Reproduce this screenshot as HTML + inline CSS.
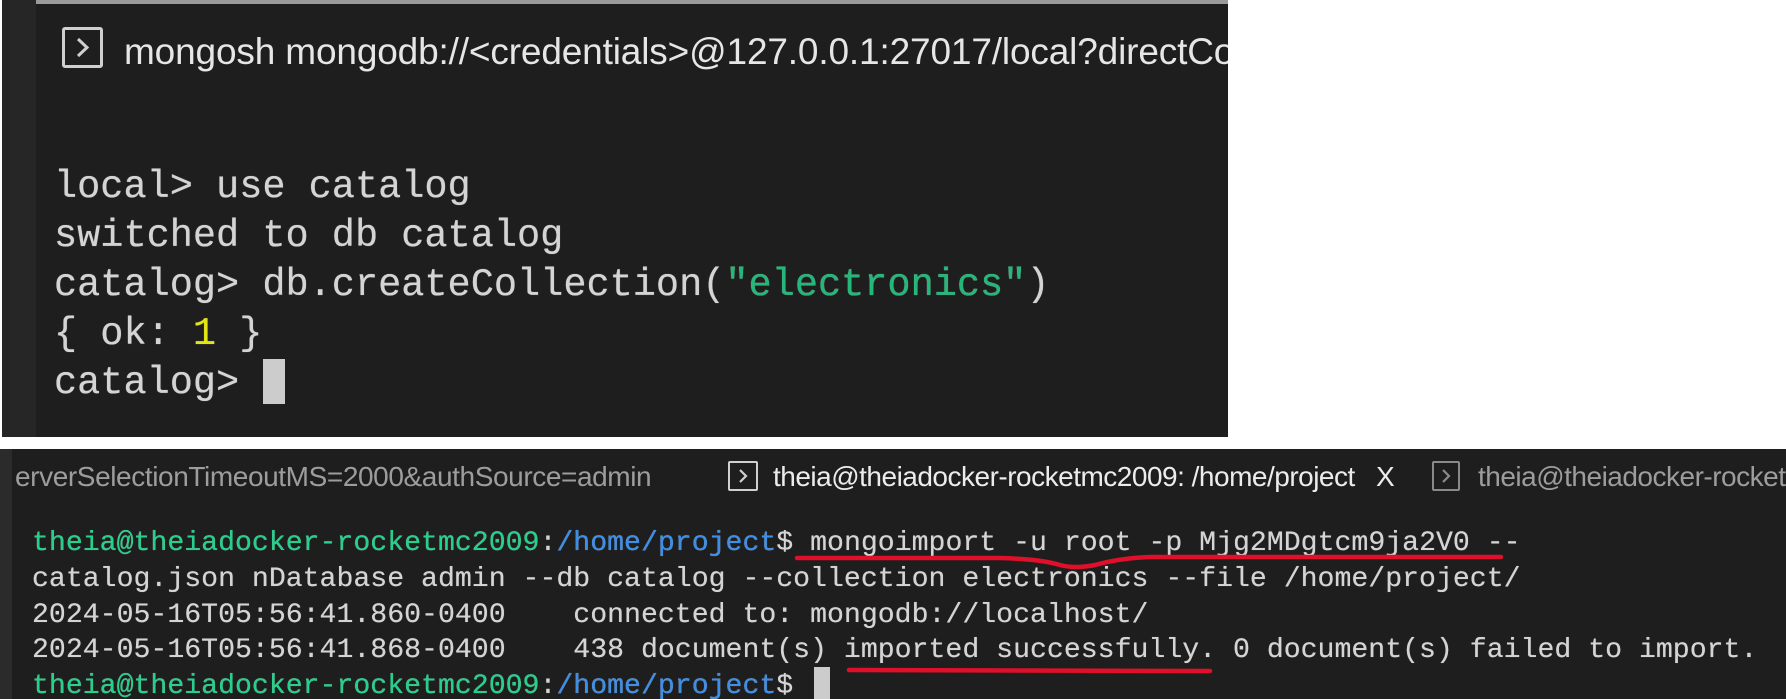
<!DOCTYPE html>
<html><head><meta charset="utf-8"><style>
*{margin:0;padding:0;box-sizing:border-box}
body{width:1786px;height:699px;background:#fff;position:relative;overflow:hidden;font-family:"Liberation Sans",sans-serif}
.p{position:absolute;background:#1e1e1e;overflow:hidden}
.a{position:absolute;white-space:pre}
.m{font-family:"Liberation Mono",monospace;color:#d4d4d4}
.g{color:#23d18b}.b{color:#3b8eea}.s{color:#23b87a}.y{color:#e5e510}
</style></head><body>
<div class="p" style="left:2px;top:0;width:1226px;height:437px">
  <div style="position:absolute;left:0;top:0;width:34px;height:437px;background:#262626"></div>
  <div style="position:absolute;left:34px;top:0;right:0;height:4px;background:#9a9a9a"></div>
  <div style="position:absolute;left:60px;top:27px;width:41px;height:41px;border:3px solid #cfcfcf;border-radius:3px"></div>
  <svg style="position:absolute;left:60px;top:27px" width="41" height="41"><path d="M16 12 L25 20.5 L16 29" stroke="#cfcfcf" stroke-width="3" fill="none"/></svg>
  <div class="a" style="left:122px;top:31px;font-size:37px;letter-spacing:-0.15px;color:#e6e6e6">mongosh mongodb://&lt;credentials&gt;@127.0.0.1:27017/local?directConnection=true</div>
  <div class="a m" style="left:52px;top:163px;font-size:38.6px;line-height:49px;text-shadow:0 0 0.6px #d4d4d4">local&gt; use catalog
switched to db catalog
catalog&gt; db.createCollection(<span class="s">"electronics"</span>)
{ ok: <span class="y">1</span> }
catalog&gt; </div>
  <div style="position:absolute;left:261px;top:359px;width:22px;height:45px;background:#cccccc"></div>
</div>
<div class="p" style="left:0;top:449px;width:1786px;height:250px">
  <div style="position:absolute;left:0;top:0;width:12px;height:250px;background:#2b2b2b"></div>
  <div class="a" style="left:15px;top:12px;font-size:28px;letter-spacing:-0.4px;color:#9d9d9d">erverSelectionTimeoutMS=2000&amp;authSource=admin</div>
  <div style="position:absolute;left:728px;top:12px;width:30px;height:30px;border:2px solid #d0d0d0;border-radius:2px"></div>
  <svg style="position:absolute;left:728px;top:12px" width="30" height="30"><path d="M12 9 L18 15 L12 21" stroke="#d0d0d0" stroke-width="2.2" fill="none"/></svg>
  <div class="a" style="left:773px;top:12px;font-size:28px;letter-spacing:-0.5px;color:#ececec">theia@theiadocker-rocketmc2009: /home/project</div>
  <div class="a" style="left:1376px;top:12px;font-size:28px;color:#ececec">X</div>
  <div style="position:absolute;left:1432px;top:12px;width:28px;height:30px;border:2px solid #8a8a8a;border-radius:2px"></div>
  <svg style="position:absolute;left:1432px;top:12px" width="28" height="30"><path d="M11 9 L17 15 L11 21" stroke="#8a8a8a" stroke-width="2.2" fill="none"/></svg>
  <div class="a" style="left:1478px;top:12px;font-size:28px;letter-spacing:-0.5px;color:#9d9d9d">theia@theiadocker-rocketmc2009: /home/project</div>
  <div class="a m" style="left:32px;top:77px;font-size:28.2px;line-height:35.8px;text-shadow:0 0 0.5px #d4d4d4"><span class="g">theia@theiadocker-rocketmc2009</span>:<span class="b">/home/project</span>$ mongoimport -u root -p Mjg2MDgtcm9ja2V0 --
catalog.json nDatabase admin --db catalog --collection electronics --file /home/project/
2024-05-16T05:56:41.860-0400    connected to: mongodb://localhost/
2024-05-16T05:56:41.868-0400    438 document(s) imported successfully. 0 document(s) failed to import.
<span class="g">theia@theiadocker-rocketmc2009</span>:<span class="b">/home/project</span>$ </div>
  <div style="position:absolute;left:814px;top:218px;width:16px;height:32px;background:#cccccc"></div>
</div>
<svg style="position:absolute;left:0;top:0" width="1786" height="699">
  <path d="M797 558 L1000 558 Q1040 559 1060 565 Q1075 569 1095 565 Q1120 558 1150 557 L1501 557" stroke="#e0102a" stroke-width="4.5" fill="none" stroke-linecap="round"/>
  <path d="M849 670 L1210 671" stroke="#e0102a" stroke-width="4.5" fill="none" stroke-linecap="round"/>
</svg>
</body></html>
